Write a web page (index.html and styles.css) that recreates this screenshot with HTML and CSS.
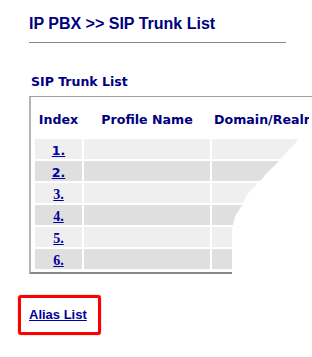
FILE: index.html
```html
<!DOCTYPE html>
<html lang="en">
  <head>
    <meta charset="UTF-8" />
    <title>IP PBX &gt;&gt; SIP Trunk List</title>
    <link rel="stylesheet" href="styles.css">
  </head>
  <body>
    <main class="page">
      <h1 class="page-title">IP PBX &gt;&gt; SIP Trunk List</h1>
      <div class="title-rule"></div>

      <h2 class="list-title">SIP Trunk List</h2>
      <div class="trunk-box">
        <table class="trunk-table">
          <thead>
            <tr>
              <th class="col-index">Index</th>
              <th class="col-name">Profile Name</th>
              <th class="col-domain">Domain/Realm</th>
            </tr>
          </thead>
          <tbody>
            <tr class="row-light"><td class="cell-index"><a href="#" class="idx-link">1.</a></td><td></td><td></td></tr>
            <tr class="row-dark"><td class="cell-index"><a href="#" class="idx-link">2.</a></td><td></td><td></td></tr>
            <tr class="row-light"><td class="cell-index"><a href="#" class="idx-link idx-serif">3.</a></td><td></td><td></td></tr>
            <tr class="row-dark"><td class="cell-index"><a href="#" class="idx-link idx-serif">4.</a></td><td></td><td></td></tr>
            <tr class="row-light"><td class="cell-index"><a href="#" class="idx-link idx-serif">5.</a></td><td></td><td></td></tr>
            <tr class="row-dark"><td class="cell-index"><a href="#" class="idx-link idx-serif">6.</a></td><td></td><td></td></tr>
          </tbody>
        </table>
      </div>

      <div class="alias-box">
        <a href="#" class="alias-link">Alias List</a>
      </div>
    </main>

    <!-- torn right edge of the screenshot -->
    <svg class="torn-edge" width="312" height="357" viewBox="0 0 312 357" aria-hidden="true">
      <polygon fill="#fff" points="313,97 311,108 309,118 307,126 303,132 299,138 297,141 293,146 289,150 285,154 281,159 276,164 271,169 266,174 262,179 258,183 254,187 250,191 247,195 245,199 243,203 241,207 239,210 237,213 235,217 234,221 233,225 232,230 232,290 313,290" />
    </svg>
  </body>
</html>
```

FILE: styles.css
```css
html,
body {
  margin: 0;
  overflow: hidden;
  background: #fff;
}
body {
  position: relative;
  width: 312px;
  height: 357px;
  font-family: "Liberation Sans", Arial, sans-serif;
}
.page {
  padding: 15px 0 0 29px;
}
.page-title {
  margin: 0;
  font-size: 16px;
  line-height: 18px;
  font-weight: 700;
  color: #000080;
}
.title-rule {
  width: 257px;
  margin-top: 9px;
  border-top: 1px solid #888;
}
.list-title {
  margin: 31px 0 0 2px;
  font-family: "DejaVu Sans", Verdana, sans-serif;
  font-size: 12.5px;
  line-height: 15px;
  font-weight: 700;
  color: #000080;
}
.trunk-box {
  margin-top: 7px;
  width: 400px;
  padding: 0 0 1px 2px;
  border-top: 1px solid #a0a0a0;
  border-left: 2px solid #b4b4b4;
  border-bottom: 2px solid #888;
}
.trunk-table {
  border-collapse: separate;
  border-spacing: 2px;
  font-family: "DejaVu Sans", Verdana, sans-serif;
}
.trunk-table th {
  height: 38px;
  padding: 3px 0 0 0;
  box-sizing: border-box;
  font-size: 12.6px;
  line-height: 15px;
  font-weight: 700;
  color: #000080;
  text-align: center;
  vertical-align: middle;
  white-space: nowrap;
}
.col-index {
  width: 47px;
}
.col-name {
  width: 126px;
}
.col-domain {
  width: 107px;
}
.trunk-table td {
  height: 20px;
  padding: 0;
  vertical-align: middle;
}
.row-light td {
  background: #efefef;
}
.row-dark td {
  background: #dfdfdf;
}
.cell-index {
  text-align: center;
}
.idx-link {
  font-size: 12.6px;
  line-height: 15px;
  font-weight: 700;
  color: #00009c;
  text-decoration: underline;
}
.idx-serif {
  font-family: "Liberation Serif", "Times New Roman", serif;
  font-size: 14px;
}
.alias-box {
  display: inline-block;
  margin: 21px 0 0 -11px;
  padding: 9px 11px 10px 8px;
  border: 3px solid #ff0000;
  border-radius: 3px;
  box-shadow: 0 0 1px #ff0000;
}
.alias-link {
  display: block;
  font-size: 13px;
  line-height: 15px;
  font-weight: 700;
  color: #0000a0;
  text-decoration: underline;
}
.torn-edge {
  position: absolute;
  left: 0;
  top: 0;
}
```
